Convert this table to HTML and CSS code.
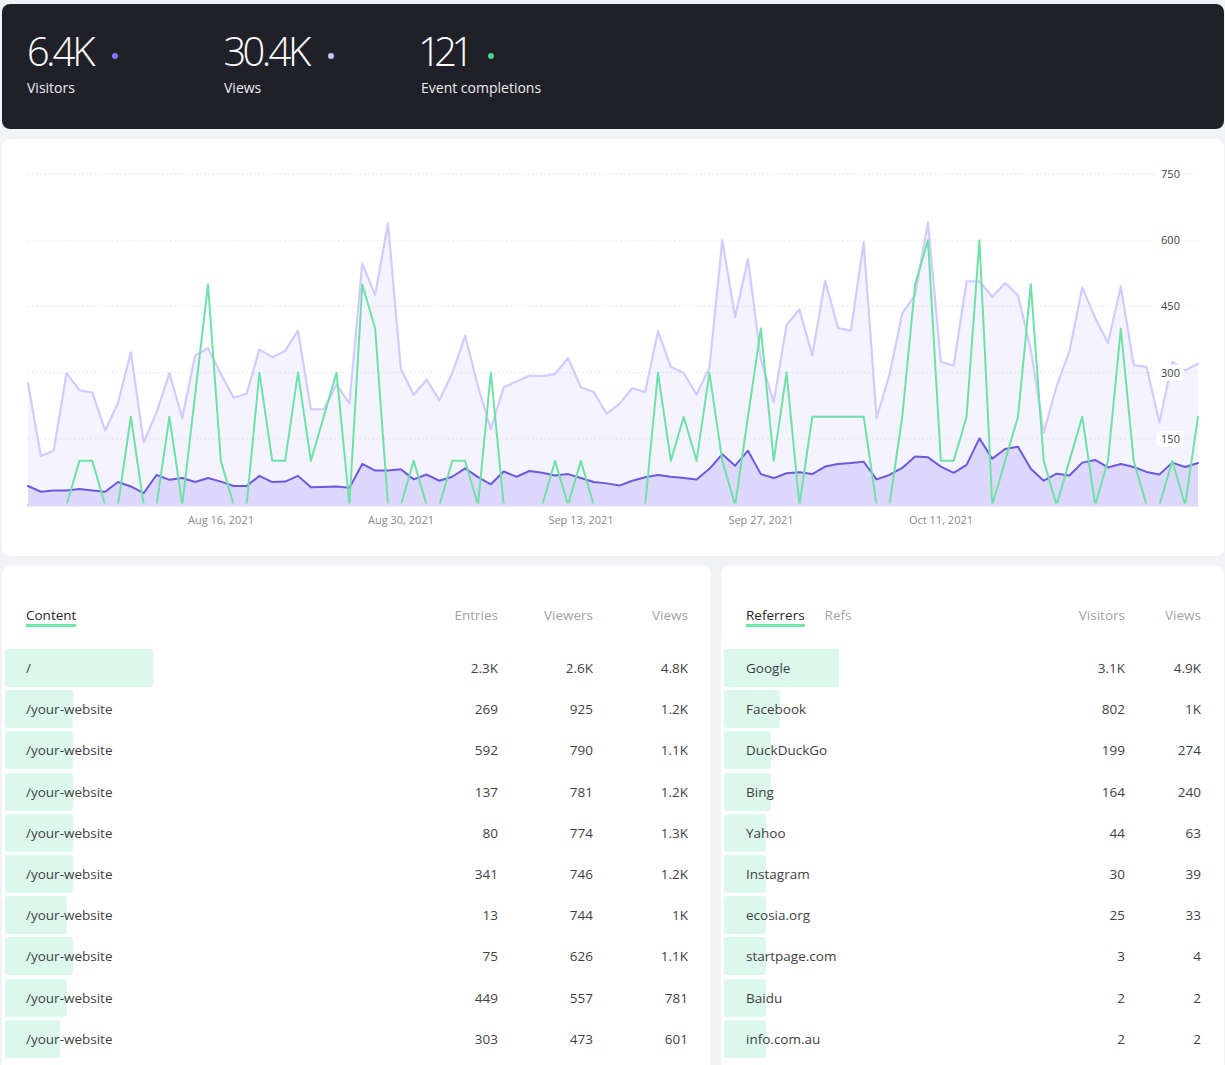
FILE: index.html
```html
<!DOCTYPE html>
<html lang="en">
<head>
<meta charset="utf-8">
<title>Analytics</title>
<link rel="stylesheet" href="styles.css">
</head>
<body>
<div class="page">
  <header class="stats">
    <div class="stat">
      <div class="stat-value"><span class="stat-num">6.4K</span><span class="dot dot-visitors"></span></div>
      <div class="stat-label">Visitors</div>
    </div>
    <div class="stat">
      <div class="stat-value"><span class="stat-num">30.4K</span><span class="dot dot-views"></span></div>
      <div class="stat-label">Views</div>
    </div>
    <div class="stat">
      <div class="stat-value"><span class="stat-num narrow">121</span><span class="dot dot-events"></span></div>
      <div class="stat-label">Event completions</div>
    </div>
  </header>

  <section class="card chart-card">
    <svg class="chart" width="1222" height="417" viewBox="0 0 1222 417">
      <g transform="translate(26 366) scale(12.857 -0.44133)">
        <polygon class="fill-views" points="0,0 0,276 1,111 2,123 3,299 4,260 5,255 6,169 7,231 8,346 9,142 10,210 11,299 12,197 13,339 14,355 15,297 16,243 17,252 18,352 19,335 20,349 21,395 22,217 23,217 24,273 25,230 26,547 27,476 28,638 29,308 30,250 31,284 32,237 33,299 34,383 35,269 36,172 37,267 38,280 39,293 40,292 41,297 42,333 43,267 44,256 45,207 46,229 47,265 48,256 49,394 50,313 51,299 52,250 53,311 54,600 55,426 56,557 57,330 58,233 59,408 60,443 61,339 62,508 63,401 64,395 65,595 66,197 67,295 68,434 69,476 70,640 71,324 72,316 73,507 74,507 75,472 76,503 77,475 78,352 79,164 80,269 81,348 82,493 83,424 84,367 85,495 86,317 87,313 88,187 89,324 90,305 91,320 91,0"/>
        <polygon class="fill-visitors" points="0,0 0,43 1,30 2,33 3,33 4,36 5,33 6,30 7,52 8,42 9,27 10,68 11,57 12,61 13,52 14,61 15,53 16,43 17,43 18,66 19,52 20,53 21,66 22,40 23,41 24,42 25,39 26,93 27,78 28,78 29,81 30,58 31,69 32,55 33,64 34,83 35,63 36,47 37,76 38,64 39,77 40,73 41,67 42,70 43,61 44,52 45,49 46,44 47,55 48,63 49,68 50,64 51,61 52,58 53,82 54,115 55,89 56,123 57,70 58,61 59,72 60,74 61,70 62,87 63,93 64,95 65,98 66,58 67,68 68,84 69,110 70,108 71,87 72,73 73,91 74,151 75,105 76,127 77,132 78,82 79,55 80,71 81,67 82,96 83,102 84,85 85,93 86,86 87,75 88,69 89,96 90,86 91,95 91,0"/>
      </g>
      <g class="grid">
        <line x1="26" x2="1196" y1="35" y2="35"/>
        <line x1="26" x2="1196" y1="101.2" y2="101.2"/>
        <line x1="26" x2="1196" y1="167.4" y2="167.4"/>
        <line x1="26" x2="1196" y1="233.6" y2="233.6"/>
        <line x1="26" x2="1196" y1="299.8" y2="299.8"/>
      </g>
      <g transform="translate(26 366) scale(12.857 -0.44133)">
        <polyline class="line-views" vector-effect="non-scaling-stroke" points="0,276 1,111 2,123 3,299 4,260 5,255 6,169 7,231 8,346 9,142 10,210 11,299 12,197 13,339 14,355 15,297 16,243 17,252 18,352 19,335 20,349 21,395 22,217 23,217 24,273 25,230 26,547 27,476 28,638 29,308 30,250 31,284 32,237 33,299 34,383 35,269 36,172 37,267 38,280 39,293 40,292 41,297 42,333 43,267 44,256 45,207 46,229 47,265 48,256 49,394 50,313 51,299 52,250 53,311 54,600 55,426 56,557 57,330 58,233 59,408 60,443 61,339 62,508 63,401 64,395 65,595 66,197 67,295 68,434 69,476 70,640 71,324 72,316 73,507 74,507 75,472 76,503 77,475 78,352 79,164 80,269 81,348 82,493 83,424 84,367 85,495 86,317 87,313 88,187 89,324 90,305 91,320"/>
        <polyline class="line-visitors" vector-effect="non-scaling-stroke" points="0,43 1,30 2,33 3,33 4,36 5,33 6,30 7,52 8,42 9,27 10,68 11,57 12,61 13,52 14,61 15,53 16,43 17,43 18,66 19,52 20,53 21,66 22,40 23,41 24,42 25,39 26,93 27,78 28,78 29,81 30,58 31,69 32,55 33,64 34,83 35,63 36,47 37,76 38,64 39,77 40,73 41,67 42,70 43,61 44,52 45,49 46,44 47,55 48,63 49,68 50,64 51,61 52,58 53,82 54,115 55,89 56,123 57,70 58,61 59,72 60,74 61,70 62,87 63,93 64,95 65,98 66,58 67,68 68,84 69,110 70,108 71,87 72,73 73,91 74,151 75,105 76,127 77,132 78,82 79,55 80,71 81,67 82,96 83,102 84,85 85,93 86,86 87,75 88,69 89,96 90,86 91,95"/>
        <polyline class="line-events" vector-effect="non-scaling-stroke" points="0,0 1,0 2,0 3,0 4,100 5,100 6,0 7,0 8,200 9,0 10,0 11,200 12,0 13,250 14,500 15,100 16,0 17,0 18,300 19,100 20,100 21,300 22,100 23,200 24,300 25,0 26,500 27,400 28,0 29,0 30,100 31,0 32,0 33,100 34,100 35,0 36,300 37,0 38,0 39,0 40,0 41,100 42,0 43,100 44,0 45,0 46,0 47,0 48,0 49,300 50,100 51,200 52,100 53,300 54,100 55,0 56,200 57,400 58,100 59,300 60,0 61,200 62,200 63,200 64,200 65,200 66,0 67,0 68,200 69,500 70,600 71,100 72,100 73,200 74,600 75,0 76,100 77,200 78,500 79,100 80,0 81,100 82,200 83,0 84,100 85,400 86,100 87,0 88,0 89,100 90,0 91,200"/>
      </g>
      <rect class="baseline" x="26" y="364.5" width="1170" height="3"/>
      <g class="y-labels">
        <rect x="1155" y="27" width="27" height="16" rx="3"/><text x="1168.5" y="39">750</text>
        <rect x="1155" y="93.2" width="27" height="16" rx="3"/><text x="1168.5" y="105.2">600</text>
        <rect x="1155" y="159.4" width="27" height="16" rx="3"/><text x="1168.5" y="171.4">450</text>
        <rect x="1155" y="225.6" width="27" height="16" rx="3"/><text x="1168.5" y="237.6">300</text>
        <rect x="1155" y="291.8" width="27" height="16" rx="3"/><text x="1168.5" y="303.8">150</text>
      </g>
      <g class="x-labels">
        <text x="219" y="385">Aug 16, 2021</text>
        <text x="399" y="385">Aug 30, 2021</text>
        <text x="579" y="385">Sep 13, 2021</text>
        <text x="759" y="385">Sep 27, 2021</text>
        <text x="939" y="385">Oct 11, 2021</text>
      </g>
    </svg>
  </section>

  <div class="tables">
    <section class="card table-card content-card">
      <div class="thead">
        <div class="tabs"><span class="tab active">Content</span></div>
        <span class="th">Entries</span>
        <span class="th">Viewers</span>
        <span class="th">Views</span>
      </div>
      <div class="rows">
        <div class="row"><span class="bar" style="width:148px"></span><span class="name">/</span><span class="num">2.3K</span><span class="num">2.6K</span><span class="num">4.8K</span></div>
        <div class="row"><span class="bar" style="width:68px"></span><span class="name">/your-website</span><span class="num">269</span><span class="num">925</span><span class="num">1.2K</span></div>
        <div class="row"><span class="bar" style="width:68px"></span><span class="name">/your-website</span><span class="num">592</span><span class="num">790</span><span class="num">1.1K</span></div>
        <div class="row"><span class="bar" style="width:68px"></span><span class="name">/your-website</span><span class="num">137</span><span class="num">781</span><span class="num">1.2K</span></div>
        <div class="row"><span class="bar" style="width:68px"></span><span class="name">/your-website</span><span class="num">80</span><span class="num">774</span><span class="num">1.3K</span></div>
        <div class="row"><span class="bar" style="width:68px"></span><span class="name">/your-website</span><span class="num">341</span><span class="num">746</span><span class="num">1.2K</span></div>
        <div class="row"><span class="bar" style="width:62px"></span><span class="name">/your-website</span><span class="num">13</span><span class="num">744</span><span class="num">1K</span></div>
        <div class="row"><span class="bar" style="width:68px"></span><span class="name">/your-website</span><span class="num">75</span><span class="num">626</span><span class="num">1.1K</span></div>
        <div class="row"><span class="bar" style="width:62px"></span><span class="name">/your-website</span><span class="num">449</span><span class="num">557</span><span class="num">781</span></div>
        <div class="row"><span class="bar" style="width:55px"></span><span class="name">/your-website</span><span class="num">303</span><span class="num">473</span><span class="num">601</span></div>
      </div>
    </section>

    <section class="card table-card ref-card">
      <div class="thead">
        <div class="tabs"><span class="tab active">Referrers</span><span class="tab">Refs</span></div>
        <span class="th">Visitors</span>
        <span class="th">Views</span>
      </div>
      <div class="rows">
        <div class="row"><span class="bar" style="width:115px"></span><span class="name">Google</span><span class="num">3.1K</span><span class="num">4.9K</span></div>
        <div class="row"><span class="bar" style="width:56px"></span><span class="name">Facebook</span><span class="num">802</span><span class="num">1K</span></div>
        <div class="row"><span class="bar" style="width:47px"></span><span class="name">DuckDuckGo</span><span class="num">199</span><span class="num">274</span></div>
        <div class="row"><span class="bar" style="width:47px"></span><span class="name">Bing</span><span class="num">164</span><span class="num">240</span></div>
        <div class="row"><span class="bar" style="width:42px"></span><span class="name">Yahoo</span><span class="num">44</span><span class="num">63</span></div>
        <div class="row"><span class="bar" style="width:42px"></span><span class="name">Instagram</span><span class="num">30</span><span class="num">39</span></div>
        <div class="row"><span class="bar" style="width:42px"></span><span class="name">ecosia.org</span><span class="num">25</span><span class="num">33</span></div>
        <div class="row"><span class="bar" style="width:42px"></span><span class="name">startpage.com</span><span class="num">3</span><span class="num">4</span></div>
        <div class="row"><span class="bar" style="width:42px"></span><span class="name">Baidu</span><span class="num">2</span><span class="num">2</span></div>
        <div class="row"><span class="bar" style="width:42px"></span><span class="name">info.com.au</span><span class="num">2</span><span class="num">2</span></div>
      </div>
    </section>
  </div>
</div>
</body>
</html>
```

FILE: styles.css
```css
* { box-sizing: border-box; }

body {
  margin: 0;
  background: #f2f3f7;
  font-family: "Open Sans", "Liberation Sans", sans-serif;
  color: #3f3f46;
}

.page {
  width: 1222px;
  margin-left: 2px;
  padding-top: 4px;
}

/* ---------- header stats ---------- */
.stats {
  background: #202128;
  border-radius: 8px;
  height: 125px;
  padding: 27px 0 0 25px;
  display: grid;
  grid-template-columns: 197px 197px 197px;
  align-content: start;
}

.stat-value {
  font-size: 40px;
  line-height: 40px;
  height: 40px;
  white-space: nowrap;
  color: #ffffff;
}

.stat-num {
  font-weight: 300;
  letter-spacing: -3.5px;
  font-variant-numeric: proportional-nums;
}

.stat-num.narrow {
  letter-spacing: -2px;
}

.dot {
  display: inline-block;
  width: 6px;
  height: 6px;
  border-radius: 50%;
  margin: 0 0 7px 20px;
}
.dot-visitors { background: #8277ee; }
.dot-views { background: #c8c0fb; }
.dot-events { background: #4fcf8a; }

.stat-label {
  margin-top: 7px;
  font-size: 14px;
  line-height: 20px;
  color: #ececf0;
}

/* ---------- chart ---------- */
.card {
  background: #ffffff;
  border-radius: 8px;
}

.chart-card {
  margin-top: 10px;
  height: 417px;
  overflow: hidden;
}

.chart { display: block; }

.fill-views { fill: #f5f3ff; }
.fill-visitors { fill: #ddd8fb; }
.baseline { fill: #ddd8fb; }

.grid line {
  stroke: #d4d4d8;
  stroke-width: 1;
  stroke-dasharray: 1 3.2;
}

.line-views,
.line-visitors,
.line-events {
  fill: none;
  stroke-width: 2;
  stroke-linejoin: round;
  stroke-linecap: round;
}
.line-views { stroke: #d3cbfd; stroke-width: 2.2; }
.line-visitors { stroke: #6a5ae0; }
.line-events { stroke: #6ee2a6; }

.y-labels rect { fill: #ffffff; }
.y-labels text {
  font-family: "Open Sans", "Liberation Sans", sans-serif;
  font-size: 11px;
  fill: #3f3f46;
  text-anchor: middle;
}

.x-labels text {
  font-family: "Open Sans", "Liberation Sans", sans-serif;
  font-size: 11px;
  fill: #8a8a94;
  text-anchor: middle;
}

/* ---------- tables ---------- */
.tables {
  margin-top: 10px;
  display: grid;
  grid-template-columns: 709px 503px;
  gap: 10px;
  align-items: start;
}

.table-card {
  padding: 40px 23px 24px 3px;
  font-size: 13.5px;
}

.thead {
  display: grid;
  line-height: 18px;
  align-items: start;
}

.content-card .thead,
.content-card .row {
  grid-template-columns: 1fr 95px 95px 95px;
  padding-left: 21px;
}

.ref-card .thead,
.ref-card .row {
  grid-template-columns: 1fr 76px 76px;
  padding-left: 22px;
}

.tabs {
  display: flex;
  gap: 20px;
}

.tab {
  color: #a1a1aa;
  border-bottom: 3px solid transparent;
}
.tab.active {
  color: #27272a;
  border-bottom-color: #6ee7a8;
}

.th {
  text-align: right;
  color: #a1a1aa;
}

.rows {
  margin-top: 22px;
  display: flex;
  flex-direction: column;
  gap: 3.2px;
}

.row {
  position: relative;
  display: grid;
  height: 38px;
  align-items: center;
  color: #3f3f46;
}

.bar {
  position: absolute;
  left: 0;
  top: 0;
  bottom: 0;
  background: #dcf8ec;
  border-radius: 3px;
}

.name,
.num {
  position: relative;
}

.num { text-align: right; }
```
